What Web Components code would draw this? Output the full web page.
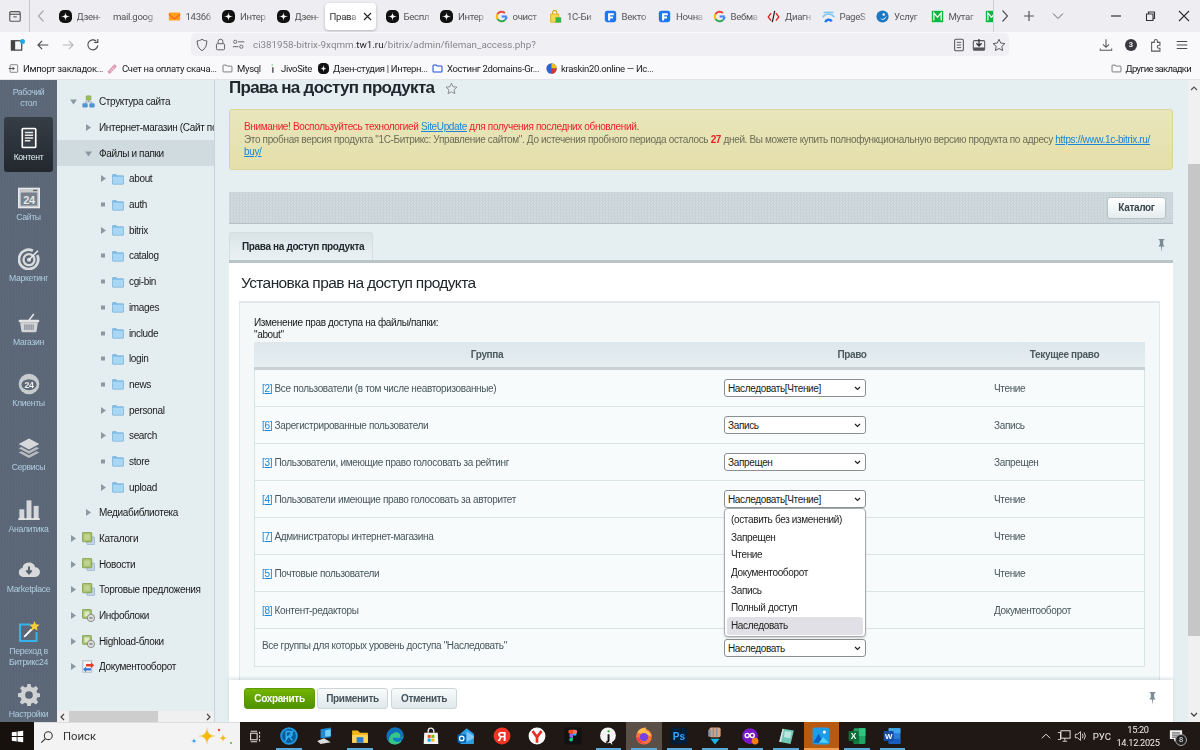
<!DOCTYPE html>
<html lang="ru">
<head>
<meta charset="utf-8">
<title>Права на доступ продукта</title>
<style>
  html, body { margin: 0; height: 100%; overflow: hidden; }
  body { display: flex; flex-direction: column; width: 1200px; height: 750px; font-family: "Liberation Sans", Arial, sans-serif; filter: blur(.3px); }
  /* slotted only reaches direct children, so nested alert links are set here */
  alert-box a { color: #1a84d6; text-decoration: underline; }
</style>
</head>
<body>

<browser-tabs>
  <browser-tab icon="dzen">Дзен-</browser-tab>
  <browser-tab>mail.goog</browser-tab>
  <browser-tab icon="mail">14366</browser-tab>
  <browser-tab icon="dzen">Интер</browser-tab>
  <browser-tab icon="dzen">Дзен-</browser-tab>
  <browser-tab active>Права</browser-tab>
  <browser-tab icon="dzen">Беспл</browser-tab>
  <browser-tab icon="dzen">Интер</browser-tab>
  <browser-tab icon="google">очист</browser-tab>
  <browser-tab icon="bag">1С-Би</browser-tab>
  <browser-tab icon="fblue">Векто</browser-tab>
  <browser-tab icon="fblue">Ночна</browser-tab>
  <browser-tab icon="google">Вебма</browser-tab>
  <browser-tab icon="diag">Диагн</browser-tab>
  <browser-tab icon="pages">PageS</browser-tab>
  <browser-tab icon="uslugi">Услуг</browser-tab>
  <browser-tab icon="mgreen">Мутаг</browser-tab>
  <browser-tab icon="mgreen"></browser-tab>
</browser-tabs>

<browser-toolbar></browser-toolbar>

<bookmarks-bar>
  <book-mark icon="import" width="99">Импорт закладок...</book-mark>
  <book-mark icon="pen" width="115">Счет на оплату скача...</book-mark>
  <book-mark icon="folder" width="44">Mysql</book-mark>
  <book-mark icon="jivo" width="52">JivoSite</book-mark>
  <book-mark icon="dzen" width="114">Дзен-студия | Интерн...</book-mark>
  <book-mark icon="folderblue" width="114">Хостинг 2domains-Gr...</book-mark>
  <book-mark icon="krask" width="110">kraskin20.online — Ис...</book-mark>
  <book-mark icon="folder" right>Другие закладки</book-mark>
</bookmarks-bar>

<admin-page>
  <admin-nav slot="nav">
    <nav-item h="37" two>Рабочий<br>стол</nav-item>
    <nav-item h="55" icon="doc" active>Контент</nav-item>
    <nav-item h="61" icon="cal">Сайты</nav-item>
    <nav-item h="64" icon="target">Маркетинг</nav-item>
    <nav-item h="61" icon="basket">Магазин</nav-item>
    <nav-item h="64" icon="cloud24">Клиенты</nav-item>
    <nav-item h="62" icon="layers">Сервисы</nav-item>
    <nav-item h="60" icon="bars">Аналитика</nav-item>
    <nav-item h="62" icon="clouddown">Marketplace</nav-item>
    <nav-item h="63" icon="wizard">Переход в<br>Битрикс24</nav-item>
    <nav-item h="53" icon="gear">Настройки</nav-item>
  </admin-nav>

  <admin-tree slot="tree">
    <tree-row level="0" arrow="down" icon="struct">Структура сайта</tree-row>
    <tree-row level="1" arrow="right">Интернет-магазин (Сайт по</tree-row>
    <tree-row level="1" arrow="down" selected>Файлы и папки</tree-row>
    <tree-row level="2" arrow="right" icon="dir">about</tree-row>
    <tree-row level="2" arrow="dot" icon="dir">auth</tree-row>
    <tree-row level="2" arrow="right" icon="dir">bitrix</tree-row>
    <tree-row level="2" arrow="dot" icon="dir">catalog</tree-row>
    <tree-row level="2" arrow="dot" icon="dir">cgi-bin</tree-row>
    <tree-row level="2" arrow="dot" icon="dir">images</tree-row>
    <tree-row level="2" arrow="dot" icon="dir">include</tree-row>
    <tree-row level="2" arrow="dot" icon="dir">login</tree-row>
    <tree-row level="2" arrow="dot" icon="dir">news</tree-row>
    <tree-row level="2" arrow="right" icon="dir">personal</tree-row>
    <tree-row level="2" arrow="right" icon="dir">search</tree-row>
    <tree-row level="2" arrow="dot" icon="dir">store</tree-row>
    <tree-row level="2" arrow="right" icon="dir">upload</tree-row>
    <tree-row level="1" arrow="right">Медиабиблиотека</tree-row>
    <tree-row level="0" arrow="right" icon="iblock">Каталоги</tree-row>
    <tree-row level="0" arrow="right" icon="iblock">Новости</tree-row>
    <tree-row level="0" arrow="right" icon="iblock">Торговые предложения</tree-row>
    <tree-row level="0" arrow="right" icon="iblock2">Инфоблоки</tree-row>
    <tree-row level="0" arrow="right" icon="iblock2">Highload-блоки</tree-row>
    <tree-row level="0" arrow="right" icon="docflow">Документооборот</tree-row>
  </admin-tree>

  <page-title>Права на доступ продукта</page-title>
  <alert-box>
    <span class="r">Внимание! Воспользуйтесь технологией <a>SiteUpdate</a> для получения последних обновлений.</span><br>
    Это пробная версия продукта "1С-Битрикс: Управление сайтом". До истечения пробного периода осталось <b>27</b> дней. Вы можете купить полнофункциональную версию продукта по адресу <a>https://www.1c-bitrix.ru/</a><br><a>buy/</a>
  </alert-box>
  <page-toolbar>Каталог</page-toolbar>
  <tab-strip>Права на доступ продукта</tab-strip>
  <edit-panel heading="Установка прав на доступ продукта">
    <span slot="caption">Изменение прав доступа на файлы/папки:<br>"about"</span>
    <perm-row num="2" value="Наследовать[Чтение]" current="Чтение">Все пользователи (в том числе неавторизованные)</perm-row>
    <perm-row num="6" value="Запись" current="Запись">Зарегистрированные пользователи</perm-row>
    <perm-row num="3" value="Запрещен" current="Запрещен">Пользователи, имеющие право голосовать за рейтинг</perm-row>
    <perm-row num="4" value="Наследовать[Чтение]" current="Чтение" open>Пользователи имеющие право голосовать за авторитет</perm-row>
    <perm-row num="7" current="Чтение">Администраторы интернет-магазина</perm-row>
    <perm-row num="5" current="Чтение">Почтовые пользователи</perm-row>
    <perm-row num="8" current="Документооборот">Контент-редакторы</perm-row>
    <perm-row value="Наследовать" last>Все группы для которых уровень доступа "Наследовать"</perm-row>
  </edit-panel>
  <save-bar></save-bar>
</admin-page>

<win-taskbar></win-taskbar>

<script>
// all icons live here, drawn on a 16x16 box
const ICONS = {
  dzen: '<rect width="16" height="16" rx="6" fill="#111"/><path d="M8 2.5C8.4 6.8 9.2 7.6 13.5 8 9.2 8.4 8.4 9.2 8 13.5 7.6 9.2 6.8 8.4 2.5 8 6.8 7.6 7.6 6.8 8 2.5Z" fill="#fff"/>',
  mail: '<path d="M1 4.5A1.5 1.5 0 0 1 2.5 3h11A1.5 1.5 0 0 1 15 4.5V12a1 1 0 0 1-1 1H2a1 1 0 0 1-1-1Z" fill="#ffa31a"/><path d="M1 4.2 8 10l7-5.8V6l-7 6-7-6Z" fill="#ff5c1a"/>',
  google: '<path d="M14.5 8H8.2" stroke="#4285f4" stroke-width="2.6" fill="none"/><path d="M14.3 8.5A6 6 0 0 1 12.2 12.3" stroke="#4285f4" stroke-width="2.6" fill="none"/><path d="M12.2 12.3A6 6 0 0 1 3.1 11" stroke="#34a853" stroke-width="2.6" fill="none"/><path d="M3.1 11A6 6 0 0 1 3.1 5" stroke="#fbbc05" stroke-width="2.6" fill="none"/><path d="M3.1 5A6 6 0 0 1 12.2 3.7" stroke="#ea4335" stroke-width="2.6" fill="none"/>',
  bag: '<path d="M2 5h10v10H2Z" fill="#f7d84a" stroke="#d9a520"/><path d="M4.5 5V3a2.5 2.5 0 0 1 5 0v2" stroke="#d9a520" fill="none" stroke-width="1.3"/><rect x="8" y="9" width="7" height="6.5" fill="#35b44a"/>',
  fblue: '<rect x="1" y="1" width="14" height="14" rx="3" fill="#1f76f2"/><path d="M5 4h7v2.5H7.5V8H11v2.4H7.5V13H5Z" fill="#fff"/>',
  diag: '<path d="M5 4 1.5 8.5 5 13" stroke="#d22" stroke-width="1.6" fill="none"/><path d="M11 4l3.5 4.5L11 13" stroke="#d22" stroke-width="1.6" fill="none"/><path d="M9.5 1 6.5 15" stroke="#222" stroke-width="1.5"/>',
  pages: '<path d="M1 9a8 8 0 0 1 14 0" stroke="#7fc6f0" stroke-width="2" fill="none"/><path d="M4 15a4.5 4.5 0 0 1 8-1" stroke="#1f76f2" stroke-width="3" fill="none"/><rect x="2" y="2" width="12" height="2" fill="#7fc6f0"/>',
  uslugi: '<circle cx="8" cy="8" r="7.5" fill="#1b78c4"/><path d="M4 9c2 3 6 3 9-2-1 5-6 7-9 2Z" fill="#fff"/><circle cx="9.5" cy="5.5" r="1.5" fill="#fff"/>',
  mgreen: '<rect x="1" y="1" width="14" height="14" fill="#12b53c"/><path d="M3.5 13V3.5L8 9l4.5-5.5V13" stroke="#fff" stroke-width="1.5" fill="none"/>',
  import: '<rect x="3" y="2.5" width="11" height="11" rx="1" fill="none" stroke="#555"/><path d="M1 8h8M6.5 5.5 9 8l-2.5 2.5" stroke="#333" stroke-width="1.2" fill="none"/>',
  pen: '<path d="M2 14c-1-1-.5-2 .5-3L10 3c1.5-1.5 4.5 1 3 3l-7.5 8c-1 1-2.5 1-3.5 0Z" fill="#e7a3bb" stroke="#c77d99" stroke-width=".7"/><path d="M4.5 9.5 8 13M7 7l3 3" stroke="#fff" stroke-width=".8"/>',
  folder: '<path d="M1.5 4a1 1 0 0 1 1-1h3.5l1.5 1.500h6a1 1 0 0 1 1 1V12a1 1 0 0 1-1 1h-11a1 1 0 0 1-1-1Z" fill="none" stroke="#555" stroke-width="1.1"/>',
  folderblue: '<path d="M1.5 4a1 1 0 0 1 1-1h3.5l1.5 1.500h6a1 1 0 0 1 1 1V12a1 1 0 0 1-1 1h-11a1 1 0 0 1-1-1Z" fill="#fff" stroke="#1c49e0" stroke-width="1.5"/>',
  jivo: '<path d="M9 2v1.5" stroke="#1a1" stroke-width="1.6"/><path d="M10 6v8" stroke="#222" stroke-width="1.6"/>',
  krask: '<circle cx="8" cy="8" r="7.5" fill="#2a62d8"/><path d="M8 .5A7.500 7.500 0 0 1 15.5 8H8Z" fill="#f4c20d"/><path d="M8 8h7.5A7.500 7.500 0 0 1 8 15.5Z" fill="#d8362a"/>',
  // tree
  struct: '<rect x="5" y="1" width="6" height="5.5" rx="1" fill="#9cc05e" stroke="#75983c" stroke-width=".6"/><path d="M8 6.5v2M4 10V8.500h8V10" stroke="#889" stroke-width=".8" fill="none"/><rect x=".5" y="10" width="6.5" height="5.5" rx="1" fill="#4e93d8"/><rect x="9" y="10" width="6.5" height="5.5" rx="1" fill="#4e93d8"/>',
  dir: '<path d="M.5 3a1 1 0 0 1 1-1h4L7 3.5h7.5a1 1 0 0 1 1 1V14a1 1 0 0 1-1 1h-13a1 1 0 0 1-1-1Z" fill="#7dbde8" stroke="#5f9cc8" stroke-width=".6"/><rect x="1.2" y="5" width="13.6" height="9.3" rx=".5" fill="#a9d6f2"/>',
  iblock: '<rect x="6" y="6" width="9.5" height="9.5" rx="1" fill="#c3d3e8" stroke="#7f9dc4" stroke-width=".7"/><rect x=".5" y=".5" width="11.5" height="11.5" rx="1" fill="#a9c46f" stroke="#7b9a45"/><rect x="3" y="3" width="6.5" height="6.5" fill="#c1d48c"/>',
  iblock2: '<rect x=".5" y=".5" width="11" height="11" rx="1" fill="#a9c46f" stroke="#7b9a45"/><rect x="3" y="3" width="6" height="6" fill="#dfe9c4"/><circle cx="11" cy="11" r="4.5" fill="#ddd" stroke="#777"/><path d="M9 11h4" stroke="#555" stroke-width="1.2"/>',
  docflow: '<rect x="1" y="1" width="11" height="14" fill="#f4f4f4" stroke="#aab"/><path d="M5 5h6V3l4 3.500L11 10V8H5Z" fill="#e5382b"/><path d="M11 10H5V8L1.5 11.5 5 15v-2h6Z" fill="#2277d8"/>',
  // left menu, grey-white
  doc: '<rect x="2.500" y=".5" width="11" height="15" rx="1.200" fill="#fff"/><rect x="3.700" y="1.700" width="8.600" height="12.600" fill="#3a4047"/><path d="M5 4h6M5 6h6M5 8h6M5 10h4" stroke="#e8e8e8" stroke-width="1"/>',
  cal: '<rect x=".5" y="1" width="15" height="14" fill="#c9cccf" stroke="#e8e9ea"/><rect x="2" y="4" width="12" height="9.5" fill="#77818c"/><text x="8" y="12" font-size="8" font-weight="700" text-anchor="middle" fill="#e6e6e6" font-family="Liberation Sans">24</text><path d="M11 2.500h3" stroke="#666" stroke-width="1"/>',
  target: '<path d="M14 5.200A7 7 0 1 1 10.800 2" fill="none" stroke="#d8dadc" stroke-width="2"/><circle cx="8" cy="8.500" r="4" fill="none" stroke="#d8dadc" stroke-width="1.700"/><circle cx="8" cy="8.500" r="1.500" fill="#d8dadc"/><path d="M8 8.500 14.500 2" stroke="#eee" stroke-width="1.100"/>',
  basket: '<path d="M8 6 11.500 1.500" stroke="#e3e3e3" stroke-width="1.200"/><rect x=".5" y="5.700" width="15" height="1.800" rx=".8" fill="#e3e3e3"/><path d="M1.500 7.500h13l-1 6.500a1 1 0 0 1-1 .8h-9a1 1 0 0 1-1-.8Z" fill="#d2d4d6"/><path d="M5 9v4M8 9v4M11 9v4M6.500 9v4M9.500 9v4" stroke="#6b7684" stroke-width=".7"/>',
  cloud24: '<circle cx="8" cy="8" r="7.500" fill="#c8cbce"/><ellipse cx="8" cy="8.500" rx="5.500" ry="4" fill="#5d6977"/><text x="8" y="11" font-size="6.500" font-weight="700" text-anchor="middle" fill="#eee" font-family="Liberation Sans">24</text>',
  layers: '<path d="M8 1 15.500 5 8 9 .5 5Z" fill="#d6d8da"/><path d="M2.500 7.200.5 8.200 8 12.200l7.500-4-2-1L8 10.200Z" fill="#b9bdc1"/><path d="M2.500 10.300.5 11.300 8 15.300l7.500-4-2-1L8 13.300Z" fill="#b9bdc1"/>',
  bars: '<rect x="1" y="7.500" width="3.600" height="7" fill="#d5d7d9"/><rect x="6.200" y="1" width="3.600" height="13.500" fill="#d5d7d9"/><rect x="11.400" y="5" width="3.600" height="9.500" fill="#d5d7d9"/><rect x=".2" y="14" width="15.600" height="1.200" fill="#eee"/>',
  clouddown: '<path d="M3.500 13a3.300 3.300 0 0 1-.3-6.500 4.800 4.800 0 0 1 9.300-.5 3.500 3.500 0 0 1 0 7Z" fill="#d8dadc"/><path d="M8 5.500v4.500M6 8.300 8 10.500l2-2.200" stroke="#56616e" stroke-width="1.500" fill="none"/>',
  wizard: '<path d="M9 2.500H1.500V14.500H13.500V8" fill="none" stroke="#35b3ea" stroke-width="1.500"/><path d="M4.500 11.500 10 6" stroke="#fff" stroke-width="1.300"/><path d="M12 0l1 2.400 2.700.4-2 1.700.6 2.600-2.300-1.400-2.300 1.400.6-2.600-2-1.700 2.700-.4Z" fill="#f6cf3a"/>',
  gear: '<path d="M6.800 0h2.400l.4 2.200 1.500.6 1.900-1.300 1.700 1.700-1.300 1.900.6 1.500 2.200.4v2.400l-2.200.4-.6 1.500 1.300 1.900-1.700 1.700-1.900-1.300-1.500.6-.4 2.200H6.800l-.4-2.200-1.500-.6-1.900 1.300-1.700-1.700 1.300-1.900-.6-1.500L0 9.200V6.800l2.200-.4.600-1.500L1.500 3l1.700-1.700 1.900 1.300 1.500-.6Z" fill="#cfd1d3"/><circle cx="8" cy="8" r="2.800" fill="#5b6777"/>',
  // toolbar line icons
  side: '<rect x="2" y="3" width="12" height="11" rx="1.500" fill="none" stroke="#555" stroke-width="1.300"/><path d="M2 6h12" stroke="#555" stroke-width="1.300"/><path d="M6 9h4" stroke="#555" stroke-width="1.200"/>',
  sidenew: '<rect x="1.500" y="4" width="11" height="10" fill="none" stroke="#444" stroke-width="1.300"/><rect x="1.500" y="4" width="4" height="10" fill="#444"/>',
  back: '<path d="M14 8H2.500M7 3.200 2.200 8 7 12.800" fill="none" stroke="#4a4a4f" stroke-width="1.300"/>',
  fwd: '<path d="M2 8h11.500M9 3.200 13.800 8 9 12.800" fill="none" stroke="#b5b5b8" stroke-width="1.300"/>',
  reload: '<path d="M13.500 8.500A5.700 5.700 0 1 1 11.600 3.500" fill="none" stroke="#4a4a4f" stroke-width="1.300"/><path d="M13.500 1v4h-4" fill="none" stroke="#4a4a4f" stroke-width="1.300"/>',
  shield: '<path d="M8 1.500c2 1.300 3.700 1.700 5.500 1.800 0 5-1.500 9-5.500 11.200C4 12.300 2.500 8.300 2.500 3.300 4.300 3.200 6 2.800 8 1.500Z" fill="none" stroke="#55555a" stroke-width="1.100"/>',
  lock: '<rect x="3" y="7" width="10" height="7.500" rx="1.200" fill="none" stroke="#55555a" stroke-width="1.100"/><path d="M5 7V4.500a3 3 0 0 1 6 0V7" fill="none" stroke="#55555a" stroke-width="1.100"/>',
  perm: '<circle cx="4" cy="4.700" r="2" fill="none" stroke="#55555a"/><path d="M7.500 4.700H15M1 10.700h7" stroke="#55555a" stroke-width="1.100"/><circle cx="11.500" cy="10.700" r="2" fill="none" stroke="#55555a"/>',
  reader: '<rect x="3" y="1.500" width="10" height="13" rx="1.500" fill="none" stroke="#55555a" stroke-width="1.200"/><path d="M5.500 5h5M5.500 8h5M5.500 11h5" stroke="#55555a" stroke-width="1.100"/>',
  pocket: '<rect x="1.500" y="3" width="13" height="11" rx="1.500" fill="none" stroke="#55555a" stroke-width="1.200"/><path d="M8 1v8M5 6l3 3.200L11 6" stroke="#333" stroke-width="1.500" fill="none"/><rect x="2" y="10.800" width="12" height="3" fill="#55555a"/>',
  star: '<path d="M8 1.500l2 4.300 4.700.6-3.500 3.200.9 4.700L8 12l-4.100 2.300.9-4.700L1.300 6.400 6 5.800Z" fill="none" stroke="#55555a" stroke-width="1.100"/>',
  dl: '<path d="M8 1.500v9M4.500 7.200 8 10.700l3.500-3.500" fill="none" stroke="#55555a" stroke-width="1.200"/><path d="M1.500 12v2h13v-2" fill="none" stroke="#55555a" stroke-width="1.200"/>',
  ext: '<path d="M3 5h3V3.500a1.800 1.800 0 0 1 3.600 0V5h2.900v3.200h-1.200a1.800 1.800 0 0 0 0 3.600h1.200V15H3Z" fill="none" stroke="#55555a" stroke-width="1.200"/>',
  menu: '<path d="M2 4h12M2 8h12M2 12h12" stroke="#4a4a4f" stroke-width="1.300"/>',
  pin: '<path d="M5 1h6v1.300H9.800V7l1.500 2H8.600L8 15l-.6-6H4.700l1.500-2V2.300H5Z" fill="#7d8a92"/>',
  // taskbar
  win: '<path d="M1 2.700 7 2v5.500H1ZM8 1.900 15 1v6.500H8ZM1 8.500h6V14l-6-.8ZM8 8.500h7V15l-7-.9Z" fill="#fff"/>',
  loupe: '<circle cx="9.500" cy="6.500" r="4.500" fill="none" stroke="#333" stroke-width="1.200"/><path d="M6.200 9.800 1.500 14.500" stroke="#333" stroke-width="1.400"/>',
  task: '<rect x="2" y="4" width="8" height="8" fill="none" stroke="#ddd" stroke-width="1.300"/><path d="M2 1.500h8M2 14.500h8M13 2v3M13 6.500v3M13 11v3" stroke="#ddd" stroke-width="1.300"/>',
  rk: '<circle cx="8" cy="8" r="7" fill="#0c5b9c" stroke="#1f9ae0" stroke-width="1.600"/><path d="M5.500 12V4h3a2.200 2.200 0 0 1 0 4.500h-3M8.500 8.500 11 12M12 3 4 13" stroke="#2fb0ee" stroke-width="1.200" fill="none"/>',
  pc: '<path d="M5 2 14 .5V9L5 10Z" fill="#1d8ad6"/><path d="M8 10l-6 2.500 3 2.500 9-1.500Z" fill="#ddd"/><path d="M9 3 14 2v6l-5 .6Z" fill="#7ecbf5"/>',
  explorer: '<path d="M1 3h5l2 2h7v9H1Z" fill="#f3b517"/><rect x="1" y="7" width="14" height="7" fill="#ffd45c"/><rect x="5" y="9" width="6" height="5" fill="#2a7ed3"/>',
  edge: '<circle cx="8" cy="8" r="7.500" fill="#0f7bc4"/><path d="M1 9C2 4 9 1.500 13.500 4.500 15 6 15.500 8 15.500 9.500H6c0 3 4.500 5 8 2.500-2 3.800-8 4.800-11 1.500C1.500 12 1 10.500 1 9Z" fill="#37c587"/><path d="M.6 8C1.500 3 5 .5 8 .5c4 0 7.500 3 7.500 6.500 0 2-1.500 2.500-3 2.500 1.500-3-2-5.500-5-4.500C5 5.700 2 8 3 13 1.500 11.500.6 10 .6 8Z" fill="#0d6fb8"/>',
  store: '<path d="M2 5h12l.5 10h-13Z" fill="#f5f5f5"/><path d="M5.500 5V3.500a2.500 2.500 0 0 1 5 0V5" fill="none" stroke="#eee" stroke-width="1.200"/><rect x="5" y="7" width="2.700" height="2.700" fill="#f25022"/><rect x="8.300" y="7" width="2.700" height="2.700" fill="#7fba00"/><rect x="5" y="10.300" width="2.700" height="2.700" fill="#00a4ef"/><rect x="8.300" y="10.300" width="2.700" height="2.700" fill="#ffb900"/>',
  outlook: '<path d="M3 6 8.500 1 15 6v9H3Z" fill="#2d9ee6"/><path d="M8.500 4 15 8v2L8.500 13Z" fill="#7cc7f5"/><rect x=".5" y="6.500" width="7.500" height="7.500" rx="1" fill="#0a64ad"/><circle cx="4.200" cy="10.200" r="2" fill="none" stroke="#fff" stroke-width="1.100"/>',
  ya: '<circle cx="8" cy="8" r="7.500" fill="#f33424"/><text x="8" y="12" font-size="11" font-weight="700" text-anchor="middle" fill="#fff" font-family="Liberation Sans">Я</text>',
  yb: '<circle cx="8" cy="8" r="7.500" fill="#fff"/><path d="M4 3.500 8 9l4-5.500M8 9v5" stroke="#e53023" stroke-width="2.400" fill="none"/>',
  figma: '<rect x=".5" y=".5" width="15" height="15" rx="1.500" fill="#111"/><circle cx="9.500" cy="6" r="1.700" fill="#1abcfe"/><path d="M5 2.500h3V6H6.300A1.700 1.700 0 0 1 5 2.500Z" fill="#f24e1e"/><path d="M8 2.500h2a1.700 1.700 0 0 1 0 3.500H8Z" fill="#ff7262"/><path d="M6.500 6H8v3.500H6.500A1.700 1.700 0 0 1 6.500 6Z" fill="#a259ff"/><path d="M6.500 9.500H8v1.700a1.700 1.700 0 1 1-1.500-1.700Z" fill="#0acf83"/>',
  j: '<circle cx="8" cy="7.500" r="7" fill="#f4f4f4"/><path d="M9 13l3 3-1-4Z" fill="#f4f4f4"/><path d="M8.500 6.500V12c0 1-1 1.500-2 1" stroke="#111" stroke-width="1.700" fill="none"/><circle cx="8.500" cy="3.800" r="1" fill="#2a2"/>',
  firefox: '<circle cx="8" cy="8.500" r="7" fill="#ff7139"/><path d="M2 5C4 1 8 .5 10 .5c-1 1.500-.5 2.500 1 3 2 .6 3 2.500 3.500 4.500" fill="#ffbd4f"/><circle cx="8" cy="9" r="3.700" fill="#7542e5"/><path d="M1 9c1 4 5 6.500 9 5.500-3 0-5.500-1.500-6-5Z" fill="#f9384f"/>',
  ps: '<rect x=".5" y=".5" width="15" height="15" rx="2.500" fill="#001e36"/><text x="8" y="11.500" font-size="9" font-weight="700" text-anchor="middle" fill="#31a8ff" font-family="Liberation Sans">Ps</text>',
  hand: '<rect x="3" y="0.500" width="10" height="8.500" rx="1.500" fill="#d9a27e"/><path d="M6.500 1v7.500M9.500 1v7.500" stroke="#7c95a8" stroke-width="1.300"/><rect x="2" y="2.500" width="2.500" height="6" fill="#8296a6"/><path d="M4 10.500h8L8 15.500Z" fill="#17b6e8"/>',
  infinity: '<circle cx="8" cy="8" r="7" fill="#7a17c6"/><circle cx="5.500" cy="7.500" r="1.800" fill="none" stroke="#fff" stroke-width="1.200"/><circle cx="10" cy="7.500" r="1.800" fill="none" stroke="#fff" stroke-width="1.200"/><circle cx="12.500" cy="12.500" r="3" fill="#f57d12"/>',
  note: '<path d="M5 1.500 15 3l-3 12L2 13Z" fill="#6fc7b6"/><path d="M5 1.500 2 13l1.500.2L6 2Z" fill="#e8e8e8"/><path d="M7 3.500l6 1-1.300 5.500L6 9Z" fill="#b8e7e0"/>',
  photos: '<rect x=".5" y=".5" width="15" height="15" rx="2" fill="#1d9de6"/><circle cx="11" cy="4.500" r="1.400" fill="#fff"/><path d="M1 14 6 6l4 8Z" fill="#0b5fc2"/><path d="M6 14l4-5 5 5Z" fill="#54d2ee"/>',
  excel: '<rect x="5" y="1" width="10.500" height="14" rx="1" fill="#21a366"/><rect x="10" y="1" width="5.500" height="7" fill="#33c481"/><rect x="5" y="8" width="5" height="7" fill="#107c41"/><rect x=".5" y="3.500" width="9" height="9" rx="1" fill="#0e6b38"/><text x="5" y="11" font-size="7.500" font-weight="700" text-anchor="middle" fill="#fff" font-family="Liberation Sans">X</text>',
  word: '<rect x="5" y="1" width="10.500" height="14" rx="1" fill="#2b7cd3"/><rect x="5" y="1" width="10.500" height="4.500" fill="#41a5ee"/><rect x="5" y="10.500" width="10.500" height="4.500" fill="#185abd"/><rect x=".5" y="3.500" width="9" height="9" rx="1" fill="#124ea8"/><text x="5" y="11" font-size="7" font-weight="700" text-anchor="middle" fill="#fff" font-family="Liberation Sans">W</text>',
  monitor: '<rect x="4.500" y="2" width="10.500" height="8.500" fill="none" stroke="#e6e6e6" stroke-width="1.100"/><path d="M9 10.500v3M6.500 14h5M1 4h3v8H1" stroke="#e6e6e6" stroke-width="1" fill="none"/>',
  volume: '<path d="M1.500 6v4h2.500l3.500 3V3L4 6Z" fill="none" stroke="#e6e6e6"/><path d="M9.500 5.500a4 4 0 0 1 0 5M11.500 4a6.500 6.500 0 0 1 0 8" fill="none" stroke="#e6e6e6"/>',
  chevup: '<path d="M2.500 11 8 5.500 13.500 11" fill="none" stroke="#e6e6e6" stroke-width="1.300"/>',
  bubble: '<path d="M1 1.500h14v10H8l-1.500 3-1-3H1Z" fill="#f0f0f0"/><path d="M3.500 4.500h9M3.500 7h9M3.500 9.300h6" stroke="#222" stroke-width=".9"/>',
};
const icon = (name, size, extra = '') =>
  `<svg xmlns="http://www.w3.org/2000/svg" viewBox="0 0 16 16" width="${size}" height="${size}" style="flex:none;display:block;${extra}">${ICONS[name] || ''}</svg>`;

// small helper: every element gets an open shadow root with its own style and markup
function element(tag, css, render) {
  customElements.define(tag, class extends HTMLElement {
    connectedCallback() {
      this.attachShadow({ mode: 'open' }).innerHTML = `<style>${css}</style>${render(this)}`;
    }
  });
}
const UI_FONT = 'Roboto, "Noto Sans", sans-serif';

element('browser-tabs', `
  :host { display: flex; align-items: center; height: 32px; background: #eeeef2; flex: none; font-family: ${UI_FONT}; }
  .side { width: 30px; display: flex; justify-content: center; border-right: 1px solid #c8c8cc; height: 32px; align-items: center; box-sizing: border-box; flex: none; }
  .prev { width: 21px; display: flex; justify-content: center; flex: none; }
  .list { display: flex; width: 943px; height: 32px; overflow: hidden; border-right: 1px solid #d0d0d4; box-sizing: border-box; flex: none; }
  .ctl { display: flex; align-items: center; flex: 1; padding-left: 6px; gap: 9px; }
  .win { display: flex; margin-left: auto; gap: 18px; padding-right: 8px; }
`, () => `
  <div class="side">${icon('side', 14)}</div>
  <div class="prev"><svg width="10" height="14" viewBox="0 0 10 14"><path d="M7.500 1.500 2.500 7l5 5.500" fill="none" stroke="#aaa" stroke-width="1.200"/></svg></div>
  <div class="list"><slot></slot></div>
  <div class="ctl">
    <svg width="10" height="14" viewBox="0 0 10 14"><path d="M2.500 1.500 7.500 7l-5 5.500" fill="none" stroke="#555" stroke-width="1.200"/></svg>
    <svg width="12" height="12" viewBox="0 0 12 12" style="margin-left:4px"><path d="M6 1v10M1 6h10" stroke="#555" stroke-width="1.200"/></svg>
    <svg width="12" height="12" viewBox="0 0 12 12" style="margin-left:8px"><path d="M1 3.500 6 8.500l5-5" fill="none" stroke="#666" stroke-width="1"/></svg>
    <div class="win">
      <svg width="16" height="16" viewBox="0 0 16 16"><path d="M3 8h10" stroke="#333" stroke-width="1.200"/></svg>
      <svg width="16" height="16" viewBox="0 0 16 16"><path d="M4.500 6h6.500v6.500H4.500ZM6.500 6V4h6v6.500H11" fill="none" stroke="#333" stroke-width="1.100"/></svg>
      <svg width="16" height="16" viewBox="0 0 16 16"><path d="M3 3 13 13M13 3 3 13" stroke="#333" stroke-width="1.200"/></svg>
    </div>
  </div>
`);

element('browser-tab', `
  :host { display: flex; align-items: center; width: 54.5px; flex: none; height: 32px; box-sizing: border-box; padding-left: 7.5px; font-size: 9.6px; letter-spacing: -.3px; color: #555; gap: 5px; position: relative; }
  :host([active]) { padding-left: 0; }
  .t { white-space: nowrap; overflow: hidden; flex: 1; -webkit-mask-image: linear-gradient(90deg, #000 70%, transparent); }
  .box { position: absolute; left: 1px; top: 3px; width: 51px; height: 27px; background: #fff; border-radius: 4px; box-shadow: 0 1px 3px rgba(0,0,0,.25); display: flex; align-items: center; padding-left: 5px; box-sizing: border-box; color: #333; }
  .box .t { width: 30px; flex: none; }
`, el => el.hasAttribute('active')
  ? `<div class="box"><span class="t"><slot></slot></span><svg width="9" height="9" viewBox="0 0 9 9" style="margin-left:3px"><path d="M1 1l7 7M8 1 1 8" stroke="#222" stroke-width="1.100"/></svg></div>`
  : `${el.getAttribute('icon') ? icon(el.getAttribute('icon'), 13) : ''}<span class="t"><slot></slot></span>`);

element('browser-toolbar', `
  :host { display: flex; align-items: center; height: 25px; background: #f9f9fb; flex: none; position: relative; font-family: ${UI_FONT}; }
  .l { display: flex; align-items: center; width: 191px; flex: none; padding-left: 10px; box-sizing: border-box; gap: 11px; position: relative; }
  .dot { position: absolute; left: 20px; top: 2px; width: 5px; height: 5px; border-radius: 50%; background: #20a8f0; }
  .url { display: flex; align-items: center; width: 818px; height: 23px; background: #f0f0f4; border-radius: 5px; flex: none; padding-left: 4px; box-sizing: border-box; gap: 5px; }
  .addr { font-size: 9.8px; color: #85858c; margin-left: 3px; white-space: nowrap; }
  .addr b { font-weight: 400; color: #222; }
  .r { margin-left: auto; display: flex; gap: 6px; padding-right: 3px; }
  .tools { display: flex; align-items: center; flex: 1; padding-left: 90px; gap: 12px; }
  .n { width: 12px; height: 12px; border-radius: 50%; background: #3a3a40; color: #eee; font-size: 7.5px; display: flex; align-items: center; justify-content: center; font-weight: 700; }
`, () => `
  <div class="l"><span class="dot"></span>${icon('sidenew', 15)}${icon('back', 14)}${icon('fwd', 14)}${icon('reload', 14)}</div>
  <div class="url">${icon('shield', 14)}${icon('lock', 13)}${icon('perm', 13)}
    <span class="addr">ci381958-bitrix-9xqmm.<b>tw1.ru</b>/bitrix/admin/fileman_access.php?</span>
    <div class="r">${icon('reader', 14)}${icon('pocket', 14)}${icon('star', 14)}</div>
  </div>
  <div class="tools">${icon('dl', 14)}<span class="n">3</span>${icon('ext', 14)}${icon('menu', 14)}</div>
`);

element('bookmarks-bar', `
  :host { display: flex; align-items: center; height: 23px; background: #f9f9fb; flex: none; padding-left: 8px; box-sizing: border-box; border-bottom: 1px solid #e0e4e6; font-family: ${UI_FONT}; }
`, () => `<slot></slot>`);

element('book-mark', `
  :host { display: flex; align-items: center; gap: 4px; font-size: 9.5px; letter-spacing: -.33px; color: #222; white-space: nowrap; flex: none; }
  :host([right]) { margin-left: auto; padding-right: 9px; letter-spacing: -.7px; }
`, el => {
  if (el.getAttribute('width')) el.style.width = el.getAttribute('width') + 'px';
  return `${icon(el.getAttribute('icon'), 11)}<slot></slot>`;
});

element('admin-page', `
  :host { display: flex; flex: 1; min-height: 0; background: #e5eef1; letter-spacing: -.35px; }
  .nav { flex: none; }
  .tree { flex: none; }
  main { flex: 1; min-width: 0; padding: 0 15px 0 14px; display: flex; flex-direction: column; overflow: hidden; border-left: 1px solid #c3d6dd; }
  .bar { width: 12px; flex: none; background: #f0f0f0; display: flex; flex-direction: column; align-items: center; }
  .thumb { width: 12px; height: 472px; background: #c6c6c6; margin-top: 79px; }
  .a { margin-top: auto; margin-bottom: 4px; }
`, () => `
  <div class="nav"><slot name="nav"></slot></div>
  <div class="tree"><slot name="tree"></slot></div>
  <main><slot></slot></main>
  <div class="bar">
    <svg width="8" height="6" viewBox="0 0 8 6" style="margin-top:5px;margin-bottom:-6px"><path d="M1 5l3-3 3 3" fill="none" stroke="#555" stroke-width="1.200"/></svg>
    <div class="thumb"></div>
    <svg class="a" width="8" height="6" viewBox="0 0 8 6"><path d="M1 1l3 3 3-3" fill="none" stroke="#444" stroke-width="1.300"/></svg>
  </div>
`);

element('admin-nav', `
  :host { display: flex; flex-direction: column; width: 57px; height: 642px; overflow: hidden;
    background: repeating-conic-gradient(#5a6676 0 25%, #5e6a7a 0 50%) 0 0 / 3px 3px; }
`, () => `<slot></slot>`);

element('nav-item', `
  :host { display: flex; flex-direction: column; align-items: center; box-sizing: border-box; padding-top: 15px; font-size: 8.7px; line-height: 11px; text-align: center; color: #afcde0; flex: none; white-space: nowrap; }
  :host([active]) { margin: 0 4px; padding-top: 10px; background: linear-gradient(#353d46, #22282e); border-radius: 3px; color: #dfeef8; }
  :host([two]) { padding-top: 7px; }
  svg { margin-bottom: 3px; }
`, el => {
  el.style.height = el.getAttribute('h') + 'px';
  const name = el.getAttribute('icon');
  return `${name ? icon(name, 22) : ''}<span><slot></slot></span>`;
});

element('admin-tree', `
  :host { display: flex; flex-direction: column; width: 157px; height: 642px; background: #e4eef1; overflow: hidden; }
  .rows { flex: 1; padding-top: 9px; overflow: hidden; }
  .sb { height: 11px; background: #f0f0f0; display: flex; align-items: center; justify-content: space-between; flex: none; position: relative; padding: 0 2px; box-sizing: border-box; }
  .th { position: absolute; left: 12px; width: 89px; top: 0; bottom: 0; background: #cdcdcd; }
`, () => `
  <div class="rows"><slot></slot></div>
  <div class="sb">
    <svg width="6" height="8" viewBox="0 0 6 8"><path d="M5 1 2 4l3 3" fill="none" stroke="#444" stroke-width="1.200"/></svg>
    <div class="th"></div>
    <svg width="6" height="8" viewBox="0 0 6 8"><path d="M1 1l3 3-3 3" fill="none" stroke="#444" stroke-width="1.200"/></svg>
  </div>
`);

element('tree-row', `
  :host { display: flex; align-items: center; height: 25.7px; font-size: 10px; color: #1a1a1a; white-space: nowrap; overflow: hidden; box-sizing: border-box; }
  :host([selected]) { background: #cfdbdf; }
  .arrow { width: 7px; height: 7px; flex: none; margin-right: 5px; display: block; }
  :host([level="1"]) .arrow { margin-right: 7px; }
`, el => {
  const level = +el.getAttribute('level');
  el.style.paddingLeft = [13, 28, 43][level] + 'px';
  const kind = el.getAttribute('arrow');
  const shapes = {
    right: '<path d="M1 0l5 3.500L1 7Z" fill="#8b99a2"/>',
    down: '<path d="M0 1.500h7L3.500 6.500Z" fill="#8b99a2"/>',
    dot: '<rect x="1" y="1.500" width="4" height="4" fill="#8b99a2"/>',
  };
  const name = el.getAttribute('icon');
  let ic = '';
  if (name) ic = icon(name, name === 'dir' ? 12 : 13, 'margin-right:' + (name === 'dir' ? 5 : 4) + 'px');
  return `<svg class="arrow" viewBox="0 0 7 7">${shapes[kind]}</svg>${ic}<span><slot></slot></span>`;
});

element('page-title', `
  :host { display: flex; align-items: center; flex: none; height: 16px; margin-bottom: 13px; font-size: 17px; letter-spacing: -.7px; font-weight: 700; color: #20282c; white-space: nowrap; gap: 11px; }
`, () => `<span><slot></slot></span>${icon('star', 13, 'opacity:.7')}`);

element('alert-box', `
  :host { display: block; flex: none; box-sizing: border-box; height: 61px; margin-bottom: 22px; padding: 11px 14px; background: linear-gradient(#e9e6bd, #e4dfa9); border: 1px solid #dbd59b; border-radius: 3px; font-size: 10px; line-height: 12.5px; color: #6d6d58; white-space: nowrap; }
  ::slotted(.r) { color: #ea1f28; }
  ::slotted(b) { color: #ea1f28; }
`, () => `<slot></slot>`);

element('page-toolbar', `
  :host { display: flex; align-items: center; justify-content: flex-end; flex: none; height: 32px; margin-bottom: 8px; padding-right: 7px; box-sizing: border-box; border-bottom: 1px solid #b4c0c5;
    background: repeating-conic-gradient(#c6d2d6 0 25%, #d2dcdf 0 50%) 0 0 / 3px 3px; }
  .b { display: flex; align-items: center; justify-content: center; width: 59px; height: 22px; box-sizing: border-box; background: linear-gradient(#fff, #e5ecee); border: 1px solid #b7c2c6; border-radius: 3px; font-size: 10px; font-weight: 700; color: #39464c; }
`, () => `<div class="b"><slot></slot></div>`);

element('tab-strip', `
  :host { display: flex; flex: none; height: 31px; box-sizing: border-box; border-bottom: 3px solid #b8c4c8; position: relative; }
  .tab { display: flex; align-items: center; width: 144px; box-sizing: border-box; padding-left: 12px; background: linear-gradient(#d9e4e7, #eaf1f3); border: 1px solid #d3dee1; border-bottom: 0; border-radius: 3px 3px 0 0; font-size: 10px; font-weight: 700; color: #20282c; white-space: nowrap; }
  .pin { margin-left: auto; padding: 6px 4px 0 0; }
`, () => `<div class="tab"><slot></slot></div><div class="pin">${icon('pin', 15)}</div>`);

element('edit-panel', `
  :host { display: block; flex: 1; min-height: 0; background: #fff; padding: 0 13px 0 10px; overflow: hidden; }
  h2 { margin: 0; height: 38px; box-sizing: border-box; padding: 2px 0 0 2px; display: flex; align-items: center; font-size: 15.5px; letter-spacing: -.62px; font-weight: 400; color: #20282c; }
  .box { background: #f4f8f9; border-top: 2px solid #e1e8ea; border-left: 1px solid #e1e8ea; border-right: 1px solid #e1e8ea; padding: 14px 14px 0; height: 400px; box-sizing: border-box; }
  .cap { font-size: 10px; line-height: 11.5px; color: #1a1a1a; height: 25px; }
  .head { display: grid; grid-template-columns: 466px 264px 161px; height: 25px; align-items: center; background: linear-gradient(#dde7ec, #e6eef1); border-bottom: 3px solid #c9d1d4; font-size: 10px; font-weight: 700; color: #4c5a60; text-align: center; }
  .rows { background: #f8fbfc; border: 1px solid #d9e3e6; border-top: 0; }
`, el => `
  <h2>${el.getAttribute('heading')}</h2>
  <div class="box">
    <div class="cap"><slot name="caption"></slot></div>
    <div class="head"><span>Группа</span><span>Право</span><span>Текущее право</span></div>
    <div class="rows"><slot></slot></div>
  </div>
`);

element('perm-row', `
  :host { display: grid; grid-template-columns: 465px 264px 160px; height: 37px; box-sizing: border-box; border-bottom: 1px solid #d9e3e6; align-items: center; font-size: 10px; color: #47565c; }
  :host([last]) { border-bottom: 0; }
  .g { padding-left: 7px; white-space: nowrap; }
  :host([last]) .g { padding-bottom: 5px; }
  .g a { color: #1a84d6; text-decoration: underline; }
  .s { padding-left: 4px; position: relative; }
  :host([last]) .s { padding-top: 1px; }
  .c { padding-left: 10px; }
`, el => {
  const num = el.getAttribute('num');
  const value = el.getAttribute('value');
  const opts = ['(оставить без изменений)', 'Запрещен', 'Чтение', 'Документооборот', 'Запись', 'Полный доступ', 'Наследовать'];
  return `
    <div class="g">${num ? `<a>[${num}]</a> ` : ''}<slot></slot></div>
    <div class="s">${value ? `<perm-select value="${value}"></perm-select>` : ''}${el.hasAttribute('open') ? `<perm-menu options="${opts.join('|')}" picked="Наследовать"></perm-menu>` : ''}</div>
    <div class="c">${el.getAttribute('current') || ''}</div>`;
});

element('perm-select', `
  :host { display: flex; align-items: center; width: 142px; height: 18px; box-sizing: border-box; background: #fff; border: 1px solid #8a8f92; border-radius: 3px; padding: 0 4px 0 3px; font-size: 10px; color: #1a1a1a; }
  svg { margin-left: auto; }
`, el => `<span>${el.getAttribute('value')}</span><svg width="7" height="5" viewBox="0 0 7 5"><path d="M1 1l2.500 2.500L6 1" fill="none" stroke="#222" stroke-width="1.200"/></svg>`);

// the open dropdown hangs over the rows below its select
element('perm-menu', `
  :host { position: absolute; left: 4px; top: 18px; width: 142px; height: 129px; box-sizing: border-box; background: #fff; border: 1px solid #a8adb0; border-radius: 4px; padding: 2px 2px; z-index: 5; font-size: 10px; color: #222; box-shadow: 0 1px 2px rgba(0,0,0,.2); }
  div { height: 17.7px; line-height: 17.7px; padding-left: 4px; border-radius: 3px; }
  .p { background: #e0e0e6; }
`, el => el.getAttribute('options').split('|').map(o =>
  `<div class="${o === el.getAttribute('picked') ? 'p' : ''}">${o}</div>`).join(''));

element('save-bar', `
  :host { display: flex; align-items: center; flex: none; height: 42px; padding: 0 13px 5px 15px; box-sizing: border-box; background: #fff; box-shadow: 0 -2px 3px rgba(120,150,160,.25); position: relative; gap: 2px; }
  .b { display: flex; align-items: center; justify-content: center; height: 21px; box-sizing: border-box; background: linear-gradient(#f9fbfb, #dfe8eb); border: 1px solid #ccd6d9; border-radius: 3px; font-size: 10px; font-weight: 700; color: #45535a; }
  .g { background: linear-gradient(#73b400, #4e9100); border-color: #5a9a08; color: #fff; }
  .pin { margin-left: auto; }
`, () => `
  <div class="b g" style="width:71px">Сохранить</div>
  <div class="b" style="width:71px">Применить</div>
  <div class="b" style="width:66px;margin-left:1px">Отменить</div>
  <div class="pin">${icon('pin', 15)}</div>
`);

element('win-taskbar', `
  :host { display: flex; align-items: center; height: 28px; flex: none; background: #201814; color: #eee; font-family: ${UI_FONT}; position: relative; }
  .start { width: 34px; height: 28px; display: flex; align-items: center; justify-content: center; background: #17110e; flex: none; }
  .search { width: 206px; height: 28px; display: flex; align-items: center; background: #f3f3f3; box-sizing: border-box; padding-left: 6px; color: #333; font-size: 11.3px; flex: none; gap: 9px; border-top: 1px solid #ddd; }
  .spark { margin-left: auto; margin-right: 8px; display: block; }
  .view { width: 31px; display: flex; justify-content: center; flex: none; }
  .apps { display: flex; flex: none; }
  .app { width: 35.5px; height: 28px; display: flex; align-items: center; justify-content: center; position: relative; flex: none; }
  .app.on::after { content: ""; position: absolute; left: 5px; right: 5px; bottom: 0; height: 2px; background: #5aa9d8; }
  .app.hot { background: #5a5048; }
  .app.act { background: #b85a10; }
  .app.act::after { left: 0; right: 0; background: #f0a050; }
  .tray { margin-left: auto; display: flex; align-items: center; font-size: 9.6px; }
  .clock { font-size: 9.2px; letter-spacing: -.3px; line-height: 13px; text-align: center; margin: 0 6px 0 2px; width: 50px; }
  .msg { position: relative; margin-right: 17px; }
  .msg span { position: absolute; right: -4px; bottom: -3px; width: 10px; height: 10px; border-radius: 50%; border: 1px solid #aaa; background: #222; font-size: 7.5px; line-height: 10px; text-align: center; }
`, () => {
  const apps = [['rk', 1], ['pc', 0], ['explorer', 1], ['edge', 0], ['store', 0], ['outlook', 0], ['ya', 0], ['yb', 0], ['figma', 0], ['j', 1], ['firefox', 1, 'hot'], ['ps', 1], ['hand', 1], ['infinity', 1], ['note', 1], ['photos', 1, 'act'], ['excel', 1], ['word', 1]];
  const star = 'M{x} {a}Q{x} {y} {b} {y}Q{x} {y} {x} {c}Q{x} {y} {d} {y}Q{x} {y} {x} {a}Z';
  const spark = (x, y, r, fill) => `<path fill="${fill}" d="${star.replace(/{x}/g, x).replace(/{y}/g, y).replace(/{a}/g, y - r).replace(/{c}/g, y + r).replace(/{b}/g, x + r).replace(/{d}/g, x - r)}"/>`;
  return `
    <div class="start">${icon('win', 13)}</div>
    <div class="search">${icon('loupe', 14)}<span>Поиск</span>
      <svg class="spark" width="42" height="22" viewBox="0 0 42 22">${spark(4, 15, 3, '#2f9be8')}${spark(17, 10, 9, '#f7b80f')}${spark(33, 12, 4.5, '#f7b80f')}<circle cx="29" cy="4" r="1.2" fill="#e8502a"/><circle cx="41" cy="17" r="1" fill="#58b030"/></svg>
    </div>
    <div class="view">${icon('task', 13)}</div>
    <div class="apps">${apps.map(a => `<div class="app ${a[1] ? 'on' : ''} ${a[2] || ''}">${icon(a[0], 18)}</div>`).join('')}</div>
    <div class="tray">${icon('chevup', 12)}${icon('monitor', 14, 'margin-left:5px')}${icon('volume', 14, 'margin-left:3px')}<span style="margin-left:5px">РУС</span>
      <div class="clock">15:20<br>14.12.2025</div>
      <div class="msg">${icon('bubble', 14)}<span>8</span></div>
    </div>`;
});
</script>
</body>
</html>
